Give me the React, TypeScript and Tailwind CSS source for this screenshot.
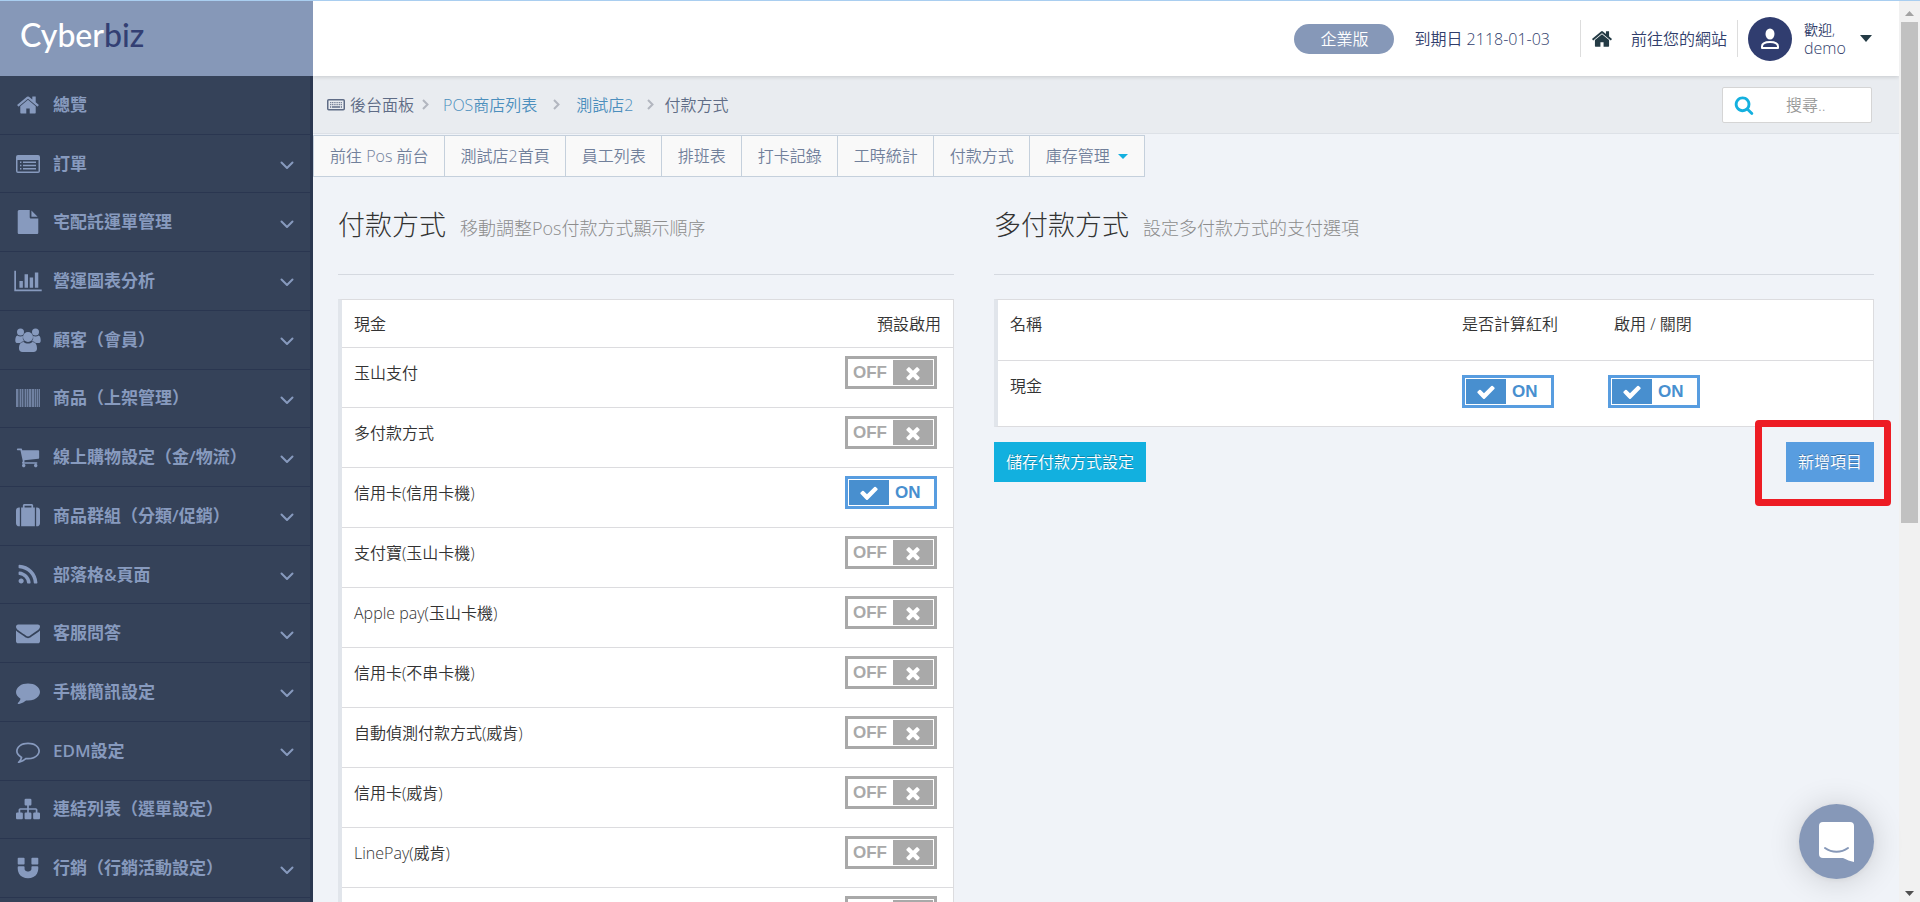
import { useState } from 'react';
import type { ReactNode } from 'react';

type IconProps = { className?: string };

const ICON_PATHS = {
    home: 'M1472 992v480q0 26-19 45t-45 19h-384v-384h-256v384h-384q-26 0-45-19t-19-45v-480q0-1 .5-3t.5-3l575-474 575 474q1 2 1 6zm223-69l-62 74q-8 9-21 11h-3q-13 0-21-7l-692-577-692 577q-12 8-24 7-13-2-21-11l-62-74q-8-10-7-23.5t11-21.5l719-599q32-26 76-26t76 26l244 204v-195q0-14 9-23t23-9h192q14 0 23 9t9 23v408l219 182q10 8 11 21.5t-7 23.5z',
    file: 'M1152 512v-472q22 14 36 28l408 408q14 14 28 36h-472zm-128 32q0 40 28 68t68 28h544v1056q0 40-28 68t-68 28h-1344q-40 0-68-28t-28-68v-1600q0-40 28-68t68-28h800v544z',
    cart: 'M704 1536q0 52-38 90t-90 38-90-38-38-90 38-90 90-38 90 38 38 90zm896 0q0 52-38 90t-90 38-90-38-38-90 38-90 90-38 90 38 38 90zm128-1088v512q0 24-16.5 42.5t-40.5 21.5l-1044 122q13 60 13 70 0 16-24 64h920q26 0 45 19t19 45-19 45-45 19h-1024q-26 0-45-19t-19-45q0-11 8-31.5t16-36 21.5-40 15.5-29.5l-177-823h-204q-26 0-45-19t-19-45 19-45 45-19h256q16 0 28.5 6.5t19.5 15.5 13 24.5 8 26 5.5 29.5 4.5 26h1201q26 0 45 19t19 45z',
    suitcase: 'M640 256h512v-128h-512v128zm-352 0v1408h-64q-92 0-158-66t-66-158v-960q0-92 66-158t158-66h64zm1120 0v1408h-1024v-1408h128v-160q0-40 28-68t68-28h576q40 0 68 28t28 68v160h128zm384 224v960q0 92-66 158t-158 66h-64v-1408h64q92 0 158 66t66 158z',
    rss: 'M576 1344q0 80-56 136t-136 56-136-56-56-136 56-136 136-56 136 56 56 136zm512 123q2 28-17 48-18 21-47 21h-135q-25 0-43-16.5t-20-41.5q-22-229-184.5-391.5t-391.5-184.5q-25-2-41.5-20t-16.5-43v-135q0-29 21-47 17-17 43-17h5q160 13 306 80.5t259 181.5q114 113 181.5 259t80.5 306zm512 2q2 27-18 47-18 20-46 20h-143q-26 0-44.5-17.5t-19.5-42.5q-12-215-101-408.5t-231.5-336-336-231.5-408.5-102q-25-1-42.5-19.5t-17.5-43.5v-143q0-28 20-46 18-18 44-18h3q262 13 501.5 120t425.5 294q187 186 294 425.5t120 501.5z',
    envelope: 'M1792 710v794q0 66-47 113t-113 47h-1472q-66 0-113-47t-47-113v-794q44 49 101 87 362 246 497 345 57 42 92.5 65.5t94.5 48 110 24.5h2q51 0 110-24.5t94.5-48 92.5-65.5q170-123 498-345 57-39 100-87zm0-294q0 79-49 151t-122 123q-376 261-468 325-10 7-42.5 31t-54 38.5-52 32.5-57.5 27-50 9h-2q-23 0-50-9t-57.5-27-52-32.5-54-38.5-42.5-31q-91-64-262-182.5t-205-142.5q-62-42-117-115.5t-55-136.5q0-78 41.5-130t118.5-52h1472q65 0 112.5 47t47.5 113z',
    comment: 'M1792 896q0 174-120 321.5t-326 233-450 85.5q-70 0-145-8-198 175-460 242-49 14-114 22h-5q-15 0-27-10.5t-16-27.5v-1q-3-4-.5-12t2-10 4.5-9.5l6-9 7-8.5 8-9q7-8 31-34.5t34.5-38 31-39.5 32.5-51 27-59 26-76q-157-89-247.5-220t-90.5-281q0-130 71-248.5t191-204.5 286-136.5 348-50.5 348 50.5 286 136.5 191 204.5 71 248.5z',
    commentHole: 'M896 384q-204 0-381.5 69.5t-282 187.5-104.5 255q0 112 71.5 213.5t201.5 175.5l87 50-27 96q-24 91-70 172 152-63 275-171l43-38 57 6q69 8 130 8 204 0 381.5-69.5t282-187.5 104.5-255-104.5-255-282-187.5-381.5-69.5z',
    sitemap: 'M1792 1248v320q0 40-28 68t-68 28h-320q-40 0-68-28t-28-68v-320q0-40 28-68t68-28h96v-192h-512v192h96q40 0 68 28t28 68v320q0 40-28 68t-68 28h-320q-40 0-68-28t-28-68v-320q0-40 28-68t68-28h96v-192h-512v192h96q40 0 68 28t28 68v320q0 40-28 68t-68 28h-320q-40 0-68-28t-28-68v-320q0-40 28-68t68-28h96v-192q0-52 38-90t90-38h512v-192h-96q-40 0-68-28t-28-68v-320q0-40 28-68t68-28h320q40 0 68 28t28 68v320q0 40-28 68t-68 28h-96v192h512q52 0 90 38t38 90v192h96q40 0 68 28t28 68z',
    magnet: 'M1664 832v128q0 201-98.5 362t-274 251.5-395.5 90.5-395.5-90.5-274-251.5-98.5-362v-128q0-26 19-45t45-19h384q26 0 45 19t19 45v128q0 52 23.5 90t53.5 57 71 30 64 13 44 2 44-2 64-13 71-30 53.5-57 23.5-90v-128q0-26 19-45t45-19h384q26 0 45 19t19 45zm-1024-640v384q0 26-19 45t-45 19h-384q-26 0-45-19t-19-45v-384q0-26 19-45t45-19h384q26 0 45 19t19 45zm1024 0v384q0 26-19 45t-45 19h-384q-26 0-45-19t-19-45v-384q0-26 19-45t45-19h384q26 0 45 19t19 45z',
    check: 'M1671 566q0 40-28 68l-724 724-136 136q-28 28-68 28t-68-28l-136-136-362-362q-28-28-28-68t28-68l136-136q28-28 68-28t68 28l294 295 656-657q28-28 68-28t68 28l136 136q28 28 28 68z',
    times: 'M1490 1322q0 40-28 68l-136 136q-28 28-68 28t-68-28l-294-294-294 294q-28 28-68 28t-68-28l-136-136q-28-28-28-68t28-68l294-294-294-294q-28-28-28-68t28-68l136-136q28-28 68-28t68 28l294 294 294-294q28-28 68-28t68 28l136 136q28 28 28 68t-28 68l-294 294 294 294q28 28 28 68z',
    search: 'M1216 832q0-185-131.5-316.5t-316.5-131.5-316.5 131.5-131.5 316.5 131.5 316.5 316.5 131.5 316.5-131.5 131.5-316.5zm512 832q0 52-38 90t-90 38q-54 0-90-38l-343-342q-179 124-399 124-143 0-273.5-55.5t-225-150-150-225-55.5-273.5 55.5-273.5 150-225 225-150 273.5-55.5 273.5 55.5 225 150 150 225 55.5 273.5q0 220-124 399l343 343q37 37 37 90z',
};

function Glyph({ d, className = 'size-6' }: { d: string } & IconProps) {
    return (
        <svg viewBox="0 0 1792 1792" className={className} fill="currentColor" fillRule="evenodd" aria-hidden="true">
            <path d={d} />
        </svg>
    );
}

function ListIcon() {
    return (
        <svg viewBox="0 0 24 24" className="size-6" fill="currentColor" aria-hidden="true">
            <path fillRule="evenodd" d="M2 3h20a2 2 0 0 1 2 2v14a2 2 0 0 1-2 2H2a2 2 0 0 1-2-2V5a2 2 0 0 1 2-2zm-.5 5v11.500h21V8z" />
            <path d="M4 9.6h1.4V11H4zM7 9.6h13V11H7zM4 12.8h1.4v1.4H4zM7 12.8h13v1.4H7zM4 16h1.4v1.4H4zM7 16h13v1.4H7z" />
        </svg>
    );
}

function ChartIcon() {
    return (
        <svg viewBox="0 0 2048 1792" className="h-6 w-7" fill="currentColor" aria-hidden="true">
            <path d="M640 896v512h-256v-512h256zm384-512v1024h-256v-1024h256zm1024 1152v128h-2048v-1536h128v1408h1920zm-640-896v768h-256v-768h256zm384-384v1152h-256v-1152h256z" />
        </svg>
    );
}

function UsersIcon() {
    return (
        <svg viewBox="0 0 26 24" className="h-6 w-[26px]" fill="currentColor" aria-hidden="true">
            <circle cx="5.5" cy="4" r="3.5" />
            <circle cx="20.500" cy="4" r="3.5" />
            <path d="M2.300 7.500c1 .7 2 1 3.200 1 1 0 1.700-.2 2.400-.5a5.800 5.800 0 0 0 1.200 5.200c-1.700.1-3 .8-4 1.900H2.700C1.100 15.100.300 14.300.300 12.700c0-2.300.3-4.700 2-5.200zM23.700 7.500c-1 .7-2 1-3.200 1-1 0-1.700-.2-2.400-.5a5.800 5.800 0 0 1-1.200 5.200c1.700.1 3 .8 4 1.900h2.400c1.600 0 2.400-.8 2.400-2.400 0-2.300-.3-4.700-2-5.200z" />
            <circle cx="13" cy="9" r="5" />
            <path d="M8.700 14c1.200 1 2.600 1.500 4.300 1.500s3.100-.5 4.300-1.500c3.700 0 4.700 3.200 4.700 6.500 0 2.200-1.300 3.500-3.400 3.500H7.400C5.300 24 4 22.700 4 20.500 4 17.200 5 14 8.700 14z" />
        </svg>
    );
}

function BarcodeIcon() {
    return (
        <svg viewBox="0 0 24 24" className="size-6" fill="currentColor" shapeRendering="crispEdges" aria-hidden="true">
            <rect x="0" y="3" width="24" height="18" opacity=".3" />
            <path opacity=".6" d="M0 3h2v18H0zM4 3h1v18H4zM6 3h1v18H6zM9 3h1v18H9zM11 3h1v18h-1zM13 3h2v18h-2zM16 3h2v18h-2zM19 3h1v18h-1zM21 3h1v18h-1zM23 3h1v18h-1z" />
        </svg>
    );
}

function Chevron({ className }: IconProps) {
    return (
        <svg viewBox="0 0 14 9" className={className} fill="none" stroke="currentColor" strokeWidth="2" strokeLinecap="round" strokeLinejoin="round" aria-hidden="true">
            <path d="M1.500 1.500L7 7l5.500-5.500" />
        </svg>
    );
}

function CrumbArrow() {
    return (
        <svg viewBox="0 0 7 11" className="h-[11px] w-[7px] text-[#b2b6bf]" fill="none" stroke="currentColor" strokeWidth="2" aria-hidden="true">
            <path d="M1 1l4.500 4.500L1 10" />
        </svg>
    );
}

function KeyboardIcon() {
    return (
        <svg viewBox="0 0 18 12" className="h-3 w-[18px]" aria-hidden="true">
            <rect x=".75" y=".75" width="16.500" height="10" rx="1" fill="none" stroke="currentColor" strokeWidth="1.500" />
            <path d="M3 3.700h12M3 5.700h12" stroke="currentColor" strokeWidth="1" strokeDasharray="1.200 .6" />
            <path d="M3 8h1.200M5 8h8M13.800 8H15" stroke="currentColor" strokeWidth="1.300" />
        </svg>
    );
}

type MenuItem = { label: string; icon: ReactNode; expandable?: boolean };

const menu: MenuItem[] = [
    { label: '總覽', icon: <Glyph d={ICON_PATHS.home} /> },
    { label: '訂單', icon: <ListIcon />, expandable: true },
    { label: '宅配託運單管理', icon: <Glyph d={ICON_PATHS.file} />, expandable: true },
    { label: '營運圖表分析', icon: <ChartIcon />, expandable: true },
    { label: '顧客（會員）', icon: <UsersIcon />, expandable: true },
    { label: '商品（上架管理）', icon: <BarcodeIcon />, expandable: true },
    { label: '線上購物設定（金/物流）', icon: <Glyph d={ICON_PATHS.cart} />, expandable: true },
    { label: '商品群組（分類/促銷）', icon: <Glyph d={ICON_PATHS.suitcase} />, expandable: true },
    { label: '部落格&頁面', icon: <Glyph d={ICON_PATHS.rss} />, expandable: true },
    { label: '客服問答', icon: <Glyph d={ICON_PATHS.envelope} />, expandable: true },
    { label: '手機簡訊設定', icon: <Glyph d={ICON_PATHS.comment} />, expandable: true },
    { label: 'EDM設定', icon: <Glyph d={ICON_PATHS.comment + ICON_PATHS.commentHole} />, expandable: true },
    { label: '連結列表（選單設定）', icon: <Glyph d={ICON_PATHS.sitemap} /> },
    { label: '行銷（行銷活動設定）', icon: <Glyph d={ICON_PATHS.magnet} />, expandable: true },
];

const tabs = ['前往 Pos 前台', '測試店2首頁', '員工列表', '排班表', '打卡記錄', '工時統計', '付款方式'];

const payments = [
    { name: '玉山支付', on: false },
    { name: '多付款方式', on: false },
    { name: '信用卡(信用卡機)', on: true },
    { name: '支付寶(玉山卡機)', on: false },
    { name: 'Apple pay(玉山卡機)', on: false },
    { name: '信用卡(不串卡機)', on: false },
    { name: '自動偵測付款方式(威肯)', on: false },
    { name: '信用卡(威肯)', on: false },
    { name: 'LinePay(威肯)', on: false },
    { name: '街口支付', on: false },
];

function Toggle({ label, initial }: { label: string; initial: boolean }) {
    const [on, setOn] = useState(initial);

    return (
        <label className={`relative flex h-[33px] w-[92px] cursor-pointer border-3 bg-white p-px font-['Liberation_Sans',sans-serif] text-[17px] leading-4 font-bold ${on ? 'border-[#589de0] text-[#488fcf]' : 'border-[#a9a9a9] text-[#a9a9a9]'}`}>
            <input type="checkbox" className="sr-only" aria-label={label} checked={on} onChange={() => setOn(!on)} />
            {on ? (
                <>
                    <span className="flex w-10 items-center justify-center bg-[#488fcf] text-white"><Glyph d={ICON_PATHS.check} className="size-5" /></span>
                    <span className="flex-1 self-center pl-1.5 text-left">ON</span>
                </>
            ) : (
                <>
                    <span className="flex-1 self-center pl-1 text-left">OFF</span>
                    <span className="flex w-10 items-center justify-center bg-[#a9a9a9] text-white"><Glyph d={ICON_PATHS.times} className="size-5" /></span>
                </>
            )}
        </label>
    );
}

function Sidebar() {
    return (
        <aside className="flex w-[313px] shrink-0 flex-col bg-[#2b3750]">
            <a href="#" className="flex h-[75px] shrink-0 items-center bg-[#8698b8] pb-2 pl-5 font-[Lato,sans-serif] text-[32px] leading-10 font-medium text-white">
                Cyber<span className="text-[#333f73]">biz</span>
            </a>
            <nav className="mr-[3px] shrink-0 bg-[#354259]">
                <ul className="grid h-[822px] auto-rows-fr">
                    {menu.map((item) => (
                        <li key={item.label} className="border-b border-[#2a3650]">
                            <a href="#" className="flex h-full items-center pr-4 pl-3.5 text-[17px] font-semibold text-[#879abe]">
                                <span className="flex w-7 shrink-0 justify-center">{item.icon}</span>
                                <span className="flex-1 pl-[11px]">{item.label}</span>
                                {item.expandable && <Chevron className="mt-1 h-[9px] w-3.5" />}
                            </a>
                        </li>
                    ))}
                </ul>
            </nav>
            <div className="mr-[3px] flex-1 bg-[#354259]" />
        </aside>
    );
}

function Header() {
    return (
        <header className="relative z-10 flex h-[75px] shrink-0 items-center justify-end bg-white pr-[27px] text-[#303d6b] shadow-[0_1px_4px_rgba(0,0,0,0.15)]">
            <span className="flex h-[30px] w-[100px] items-center justify-center rounded-full bg-[#8698b8] text-white">企業版</span>
            <span className="ml-5">到期日 2118-01-03</span>
            <span className="ml-[30px] h-[37px] w-px bg-[#dddddd]" />
            <a href="#" className="flex items-center gap-[18px] px-2.5">
                <Glyph d={ICON_PATHS.home} className="size-[22px] text-[#243b45]" />
                前往您的網站
            </a>
            <span className="h-[37px] w-px bg-[#dddddd]" />
            <button type="button" className="ml-2.5 flex cursor-pointer items-center text-left">
                <span className="flex size-11 items-center justify-center rounded-full bg-[#303d6f]">
                    <svg viewBox="0 0 20 22" className="h-[22px] w-5" aria-hidden="true">
                        <ellipse cx="10" cy="6" rx="4.500" ry="5.500" fill="#fff" />
                        <path d="M2 20v-1.500c0-3 2.500-4.500 8-4.500s8 1.500 8 4.500V20z" fill="none" stroke="#fff" strokeWidth="2" strokeLinejoin="round" />
                    </svg>
                </span>
                <span className="flex w-[68px] flex-col pl-3">
                    <span className="text-sm leading-[18px]">歡迎,</span>
                    <span className="leading-[18px]">demo</span>
                </span>
                <svg viewBox="0 0 12 7" className="h-[7px] w-3 text-[#243b45]" fill="currentColor" aria-hidden="true"><path d="M0 0h12L6 7z" /></svg>
            </button>
        </header>
    );
}

function Breadcrumbs() {
    return (
        <div className="flex h-[58px] shrink-0 items-center justify-between border-b border-[#dde1e7] bg-[#e9ecf0] pr-[27px] pl-3.5">
            <ol className="flex items-center text-[#5f6c86]">
                <li className="flex items-center gap-[5px]"><KeyboardIcon />後台面板</li>
                <li className="mr-3.5 ml-2"><CrumbArrow /></li>
                <li><a href="#" className="text-[#4c8fbd]">POS商店列表</a></li>
                <li className="mx-4"><CrumbArrow /></li>
                <li><a href="#" className="text-[#4c8fbd]">測試店2</a></li>
                <li className="mr-2.5 ml-3.5"><CrumbArrow /></li>
                <li>付款方式</li>
            </ol>
            <label className="flex h-9 w-[150px] items-center rounded-xs border border-[#d5d5d5] bg-white pl-[11px]">
                <Glyph d={ICON_PATHS.search} className="size-5 shrink-0 text-[#14b0df]" />
                <input type="search" aria-label="搜尋" placeholder="搜尋.." className="ml-8 w-full min-w-0 outline-none placeholder:text-[#999999]" />
            </label>
        </div>
    );
}

function Tabs() {
    return (
        <nav className="mt-px flex">
            <ul className="flex border border-[#c5d0dc] bg-[#f9f9f9] leading-10 text-[#71809b]">
                {tabs.map((tab) => (
                    <li key={tab} className="border-r border-[#c5d0dc]"><a href="#" className="block pr-[15px] pl-4">{tab}</a></li>
                ))}
                <li>
                    <button type="button" className="flex cursor-pointer items-center gap-2 px-4">
                        庫存管理
                        <svg viewBox="0 0 10 5" className="h-[5px] w-2.5 text-[#14b0df]" fill="currentColor" aria-hidden="true"><path d="M0 0h10L5 5z" /></svg>
                    </button>
                </li>
            </ul>
        </nav>
    );
}

function SectionTitle({ title, hint }: { title: string; hint: string }) {
    return (
        <div className="mb-6 flex h-[74px] items-baseline gap-3.5 border-b border-[#d5d9e0]">
            <h1 className="text-[27px] leading-[48px] font-light text-[#333333]">{title}</h1>
            <small className="text-lg font-light text-[#8c8c8c]">{hint}</small>
        </div>
    );
}

function PaymentTable() {
    return (
        <table className="w-full border-separate border-spacing-0 border border-l-4 border-[#dcdcdf] border-l-[#e1e5eb] bg-white text-[#333333]">
            <thead>
                <tr className="h-[47px] text-left align-top">
                    <th className="px-3 pt-3 font-[350]">現金</th>
                    <th className="w-[140px] px-3 pt-3 text-right font-[350]">預設啟用</th>
                </tr>
            </thead>
            <tbody>
                {payments.map((row) => (
                    <tr key={row.name} className="h-[60px] align-top">
                        <td className="border-t border-[#dcdcdf] px-3 pt-[13px]">{row.name}</td>
                        <td className="border-t border-[#dcdcdf] pt-2 pr-4">
                            <div className="flex justify-end"><Toggle label={row.name} initial={row.on} /></div>
                        </td>
                    </tr>
                ))}
            </tbody>
        </table>
    );
}

function MultiPaymentTable() {
    return (
        <table className="w-full border-separate border-spacing-0 border border-l-4 border-[#dcdcdf] border-l-[#e1e5eb] bg-white text-[#333333]">
            <thead>
                <tr className="h-[60px] text-left align-top">
                    <th className="px-3 pt-3 font-[350]">名稱</th>
                    <th className="w-[146px] pt-3 font-[350]">是否計算紅利</th>
                    <th className="w-[265px] pt-3 pl-1.5 font-[350]">啟用 / 關閉</th>
                </tr>
            </thead>
            <tbody>
                <tr className="h-[66px] align-top">
                    <td className="border-t border-[#dcdcdf] px-3 pt-[13px]">現金</td>
                    <td className="border-t border-[#dcdcdf] pt-3.5"><Toggle label="是否計算紅利" initial /></td>
                    <td className="border-t border-[#dcdcdf] pt-3.5"><Toggle label="啟用 / 關閉" initial /></td>
                </tr>
            </tbody>
        </table>
    );
}

/* always-visible page scrollbar */
function Scrollbar() {
    return (
        <div className="flex w-[21px] shrink-0 flex-col items-center bg-[#f1f1f1] text-[#a3a3a3]">
            <svg viewBox="0 0 9 5" className="mt-2.5 h-[5px] w-[9px]" fill="currentColor" aria-hidden="true"><path d="M4.500 0L9 5H0z" /></svg>
            <div className="mt-1.5 h-5/9 w-[17px] bg-[#c1c1c1]" />
            <svg viewBox="0 0 9 5" className="mt-auto mb-1.5 h-[5px] w-[9px] text-[#505050]" fill="currentColor" aria-hidden="true"><path d="M0 0h9L4.500 5z" /></svg>
        </div>
    );
}

export default function App() {
    return (
        <div className="flex h-screen overflow-hidden border-t border-[#a9cef0] bg-[#f0f3f8] font-['Open_Sans','Noto_Sans_CJK_TC',sans-serif] text-base leading-6 font-[350]">
            <Sidebar />

            <div className="flex min-w-0 flex-1 flex-col overflow-hidden">
                <Header />
                <Breadcrumbs />
                <Tabs />

                <main className="grid grid-cols-[7fr_10fr] gap-10 px-[25px] pt-6">
                    <section>
                        <SectionTitle title="付款方式" hint="移動調整Pos付款方式顯示順序" />
                        <PaymentTable />
                    </section>

                    <section>
                        <SectionTitle title="多付款方式" hint="設定多付款方式的支付選項" />
                        <MultiPaymentTable />
                        <div className="mt-[15px] flex justify-between text-white">
                            <button type="button" className="h-10 cursor-pointer bg-[#12b0df] px-3 text-shadow-[0_-1px_0_rgba(0,0,0,0.25)]">儲存付款方式設定</button>
                            <div className="relative">
                                <button type="button" className="h-10 cursor-pointer bg-[#589de0] px-3 text-shadow-[0_-1px_0_rgba(0,0,0,0.25)]">新增項目</button>
                                <div className="pointer-events-none absolute -top-[22px] -right-[17px] -bottom-6 -left-[31px] rounded-sm border-7 border-[#ed1c24]" />
                            </div>
                        </div>
                    </section>
                </main>
            </div>

            <Scrollbar />

            <button type="button" aria-label="線上客服" className="fixed right-[46px] bottom-[23px] flex size-[75px] cursor-pointer items-center justify-center rounded-full bg-[#8698b8] shadow-[0_1px_6px_rgba(0,0,0,0.06),0_2px_32px_rgba(0,0,0,0.16)]">
                <svg viewBox="0 0 35 40" className="h-10 w-[35px]" aria-hidden="true">
                    <path d="M4 0h27a4 4 0 0 1 4 4v36c-4-1-7-2-11-4H4a4 4 0 0 1-4-4V4a4 4 0 0 1 4-4z" fill="#fff" />
                    <path d="M6 26c7 5 16 5 23 0" fill="none" stroke="#8698b8" strokeWidth="2" strokeLinecap="round" />
                </svg>
            </button>
        </div>
    );
}
